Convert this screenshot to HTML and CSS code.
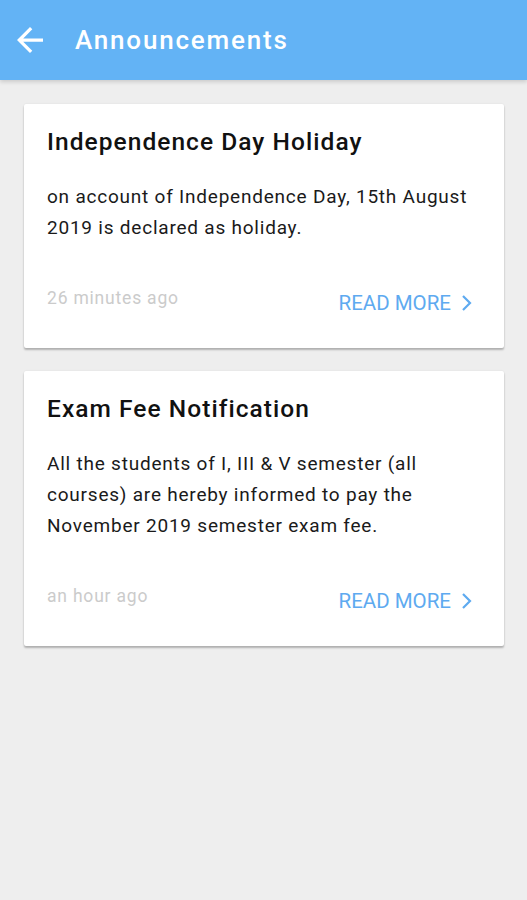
FILE: index.html
```html
<!DOCTYPE html>
<html lang="en">
<head>
    <meta charset="UTF-8">
    <meta name="viewport" content="width=device-width, initial-scale=1.0">
    <title>Announcements</title>
    <link rel="stylesheet" href="styles.css">
</head>
<body>
    <header class="app-bar">
        <button class="back-btn" aria-label="Back">
            <svg width="26" height="26" viewBox="4 4 16 16">
                <path d="M20 11H7.83l5.59-5.59L12 4l-8 8 8 8 1.41-1.41L7.83 13H20v-2z" fill="#fff"/>
            </svg>
        </button>
        <h1>Announcements</h1>
    </header>

    <main class="list">
        <article class="card">
            <h2>Independence Day Holiday</h2>
            <p class="body">on account of Independence Day, 15th August 2019 is declared as holiday.</p>
            <div class="card-footer">
                <span class="time">26 minutes ago</span>
                <a class="read-more" href="#">READ MORE
                    <svg width="12" height="18" viewBox="0 0 12 18"><path d="M3 2l7 7-7 7" fill="none" stroke="currentColor" stroke-width="2.2"/></svg>
                </a>
            </div>
        </article>

        <article class="card">
            <h2>Exam Fee Notification</h2>
            <p class="body">All the students of I, III &amp; V semester (all courses) are hereby informed to pay the November 2019 semester exam fee.</p>
            <div class="card-footer">
                <span class="time">an hour ago</span>
                <a class="read-more" href="#">READ MORE
                    <svg width="12" height="18" viewBox="0 0 12 18"><path d="M3 2l7 7-7 7" fill="none" stroke="currentColor" stroke-width="2.2"/></svg>
                </a>
            </div>
        </article>
    </main>
</body>
</html>
```

FILE: styles.css
```css
* {
    margin: 0;
    padding: 0;
    box-sizing: border-box;
}
body {
    font-family: Roboto, 'Noto Sans', sans-serif;
    background-color: #eeeeee;
    color: #111;
    min-height: 900px;
}
.app-bar {
    height: 80px;
    background-color: #63b3f5;
    display: flex;
    align-items: center;
    padding-left: 17px;
    box-shadow: 0 2px 4px rgba(0, 0, 0, 0.15);
}
.back-btn {
    background: none;
    border: none;
    width: 26px;
    height: 26px;
    display: flex;
    align-items: center;
    justify-content: center;
    margin-right: 32px;
}
.app-bar h1 {
    color: #fff;
    font-size: 26px;
    font-weight: 500;
    letter-spacing: 1.8px;
}
.list {
    padding: 24px 23px 24px 24px;
    display: flex;
    flex-direction: column;
    gap: 23px;
}
.card {
    background-color: #fff;
    border-radius: 2px;
    padding: 23px 29px 0 23px;
    box-shadow: 0 2px 2px rgba(0, 0, 0, 0.25), 0 0 2px rgba(0, 0, 0, 0.08);
}
.card h2 {
    font-size: 24.5px;
    font-weight: 500;
    line-height: 30px;
    letter-spacing: 1.05px;
    margin-bottom: 24px;
}
.body {
    font-size: 19px;
    line-height: 31px;
    letter-spacing: 0.78px;
    color: #1a1a1a;
}
.card-footer {
    display: flex;
    justify-content: space-between;
    align-items: center;
    margin-top: 35px;
    height: 70px;
    padding-bottom: 20px;
}
.time {
    font-size: 17.5px;
    letter-spacing: 0.8px;
    color: #cbcbcb;
    margin-top: -10px;
}
.read-more {
    color: #5eaaf0;
    font-size: 20.5px;
    text-decoration: none;
    display: flex;
    align-items: center;
    gap: 9px;
    margin-right: 3px;
}
```
